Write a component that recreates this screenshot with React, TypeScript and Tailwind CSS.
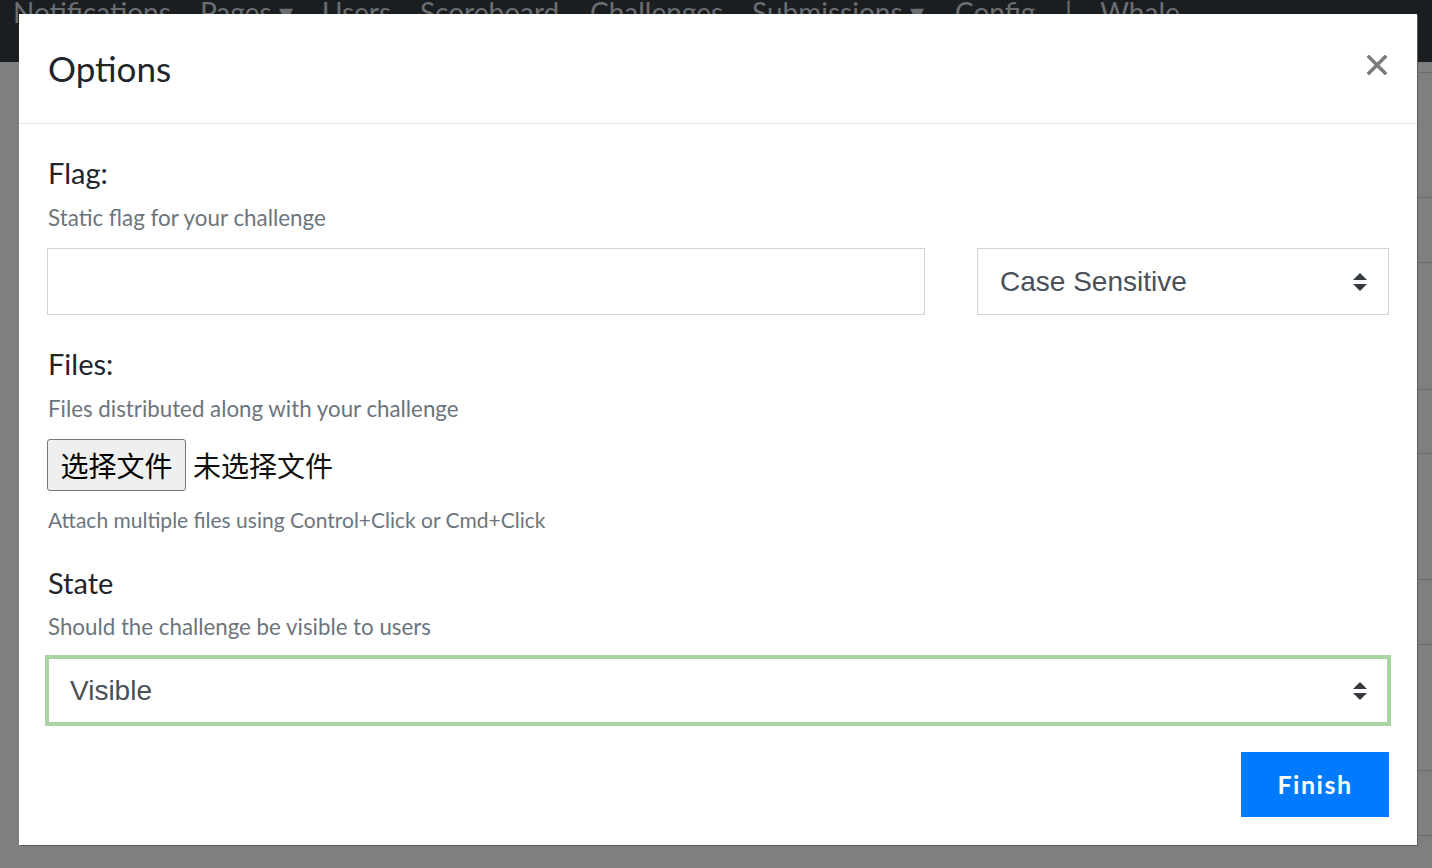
import React from 'react'

const lato = { fontFamily: 'Lato, "Noto Sans", sans-serif' }

function SelectArrows() {
  return (
    <svg width="14" height="18" viewBox="0 0 14 18" className="shrink-0">
      <path d="M7 0 L14 7 L0 7 Z" fill="#343a40" />
      <path d="M0 11 L14 11 L7 18 Z" fill="#343a40" />
    </svg>
  )
}

const rowLines = [72, 197, 262, 389, 453, 579, 644, 770, 835]

export default function App() {
  return (
    <div className="relative h-[868px] w-full overflow-hidden bg-[#7f7f7f]" style={lato}>
      {/* page behind the backdrop */}
      <div className="flex h-[62px] items-start overflow-hidden bg-[#1b1e21] pl-[13px] text-[28px] leading-[34px] text-[#6b6e71]">
        <span className="-mt-[5px] w-[187px] shrink-0 whitespace-nowrap">Notifications</span>
        <span className="-mt-[5px] w-[122px] shrink-0 whitespace-nowrap">Pages ▾</span>
        <span className="-mt-[5px] w-[98px] shrink-0 whitespace-nowrap">Users</span>
        <span className="-mt-[5px] w-[170px] shrink-0 whitespace-nowrap">Scoreboard</span>
        <span className="-mt-[5px] w-[162px] shrink-0 whitespace-nowrap">Challenges</span>
        <span className="-mt-[5px] w-[203px] shrink-0 whitespace-nowrap">Submissions ▾</span>
        <span className="-mt-[5px] w-[110px] shrink-0 whitespace-nowrap">Config</span>
        <span className="-mt-[5px] w-[35px] shrink-0 whitespace-nowrap">|</span>
        <span className="-mt-[5px] w-[120px] shrink-0 whitespace-nowrap">Whale</span>
      </div>
      {rowLines.map(y => (
        <div key={y} className="absolute left-[120px] right-0 h-px bg-[#6b6b6b]" style={{ top: y }} />
      ))}

      {/* modal */}
      <div className="absolute left-[19px] top-[14px] flex h-[831px] w-[1398px] flex-col bg-white shadow-[1px_1px_0_#5a5a5a]">
        <div className="flex h-[110px] shrink-0 items-start justify-between border-b border-[#e3e3e3] pl-[29px] pr-[30px]">
          <h1 className="mt-[32px] text-[35px] leading-[44px] text-[#212529]">Options</h1>
          <button className="mt-[41px]" aria-label="Close">
            <svg width="20" height="20" viewBox="0 0 20 20">
              <path d="M2 2 L18 18 M18 2 L2 18" stroke="#7c7c7c" strokeWidth="3.6" strokeLinecap="square" />
            </svg>
          </button>
        </div>

        <div className="flex flex-col px-[28px] pt-[31px]">
          <label className="pl-px text-[29px] leading-[36px] text-[#212529]">Flag:</label>
          <p className="mt-[13px] pl-px text-[22.4px] leading-[28px] text-[#6c757d]">Static flag for your challenge</p>
          <div className="mt-[16px] grid grid-cols-[878px_1fr] gap-x-[52px]">
            <input className="h-[67px] border border-[#ced4da] bg-white outline-none" />
            <div className="flex h-[67px] items-center justify-between border border-[#ced4da] pl-[22px] pr-[21px]">
              <span className="text-[28px] text-[#495057]" style={{ fontFamily: '"Liberation Sans", Arial, sans-serif' }}>
                Case Sensitive
              </span>
              <SelectArrows />
            </div>
          </div>

          <label className="mt-[31px] pl-px text-[29px] leading-[36px] text-[#212529]">Files:</label>
          <p className="mt-[13px] pl-px text-[22.3px] leading-[28px] text-[#6c757d]">Files distributed along with your challenge</p>
          <div
            className="mt-[16px] flex items-center gap-[7px]"
            style={{ fontFamily: '"Noto Sans CJK SC", "Noto Sans", sans-serif' }}
          >
            <button className="h-[52px] w-[139px] rounded-[3px] border border-[#767676] bg-[#efefef] text-[28px] text-black">
              选择文件
            </button>
            <span className="text-[28px] text-[#111]">未选择文件</span>
          </div>
          <p className="mt-[16px] pl-px text-[21px] leading-[26px] text-[#6c757d]">
            Attach multiple files using Control+Click or Cmd+Click
          </p>

          <label className="mt-[32px] pl-px text-[29px] leading-[36px] text-[#212529]">State</label>
          <p className="mt-[12px] pl-px text-[22.3px] leading-[28px] text-[#6c757d]">Should the challenge be visible to users</p>
          <div className="-mx-[2px] mt-[14px] flex h-[71px] items-center justify-between border-[4px] border-[#a9d5a3] pl-[21px] pr-[20px]">
            <span className="text-[28px] text-[#495057]" style={{ fontFamily: '"Liberation Sans", Arial, sans-serif' }}>
              Visible
            </span>
            <SelectArrows />
          </div>

          <div className="mt-[26px] flex justify-end">
            <button className="h-[65px] w-[148px] bg-[#007bff] text-[25px] font-bold tracking-[1.5px] text-white">
              Finish
            </button>
          </div>
        </div>
      </div>
    </div>
  )
}
